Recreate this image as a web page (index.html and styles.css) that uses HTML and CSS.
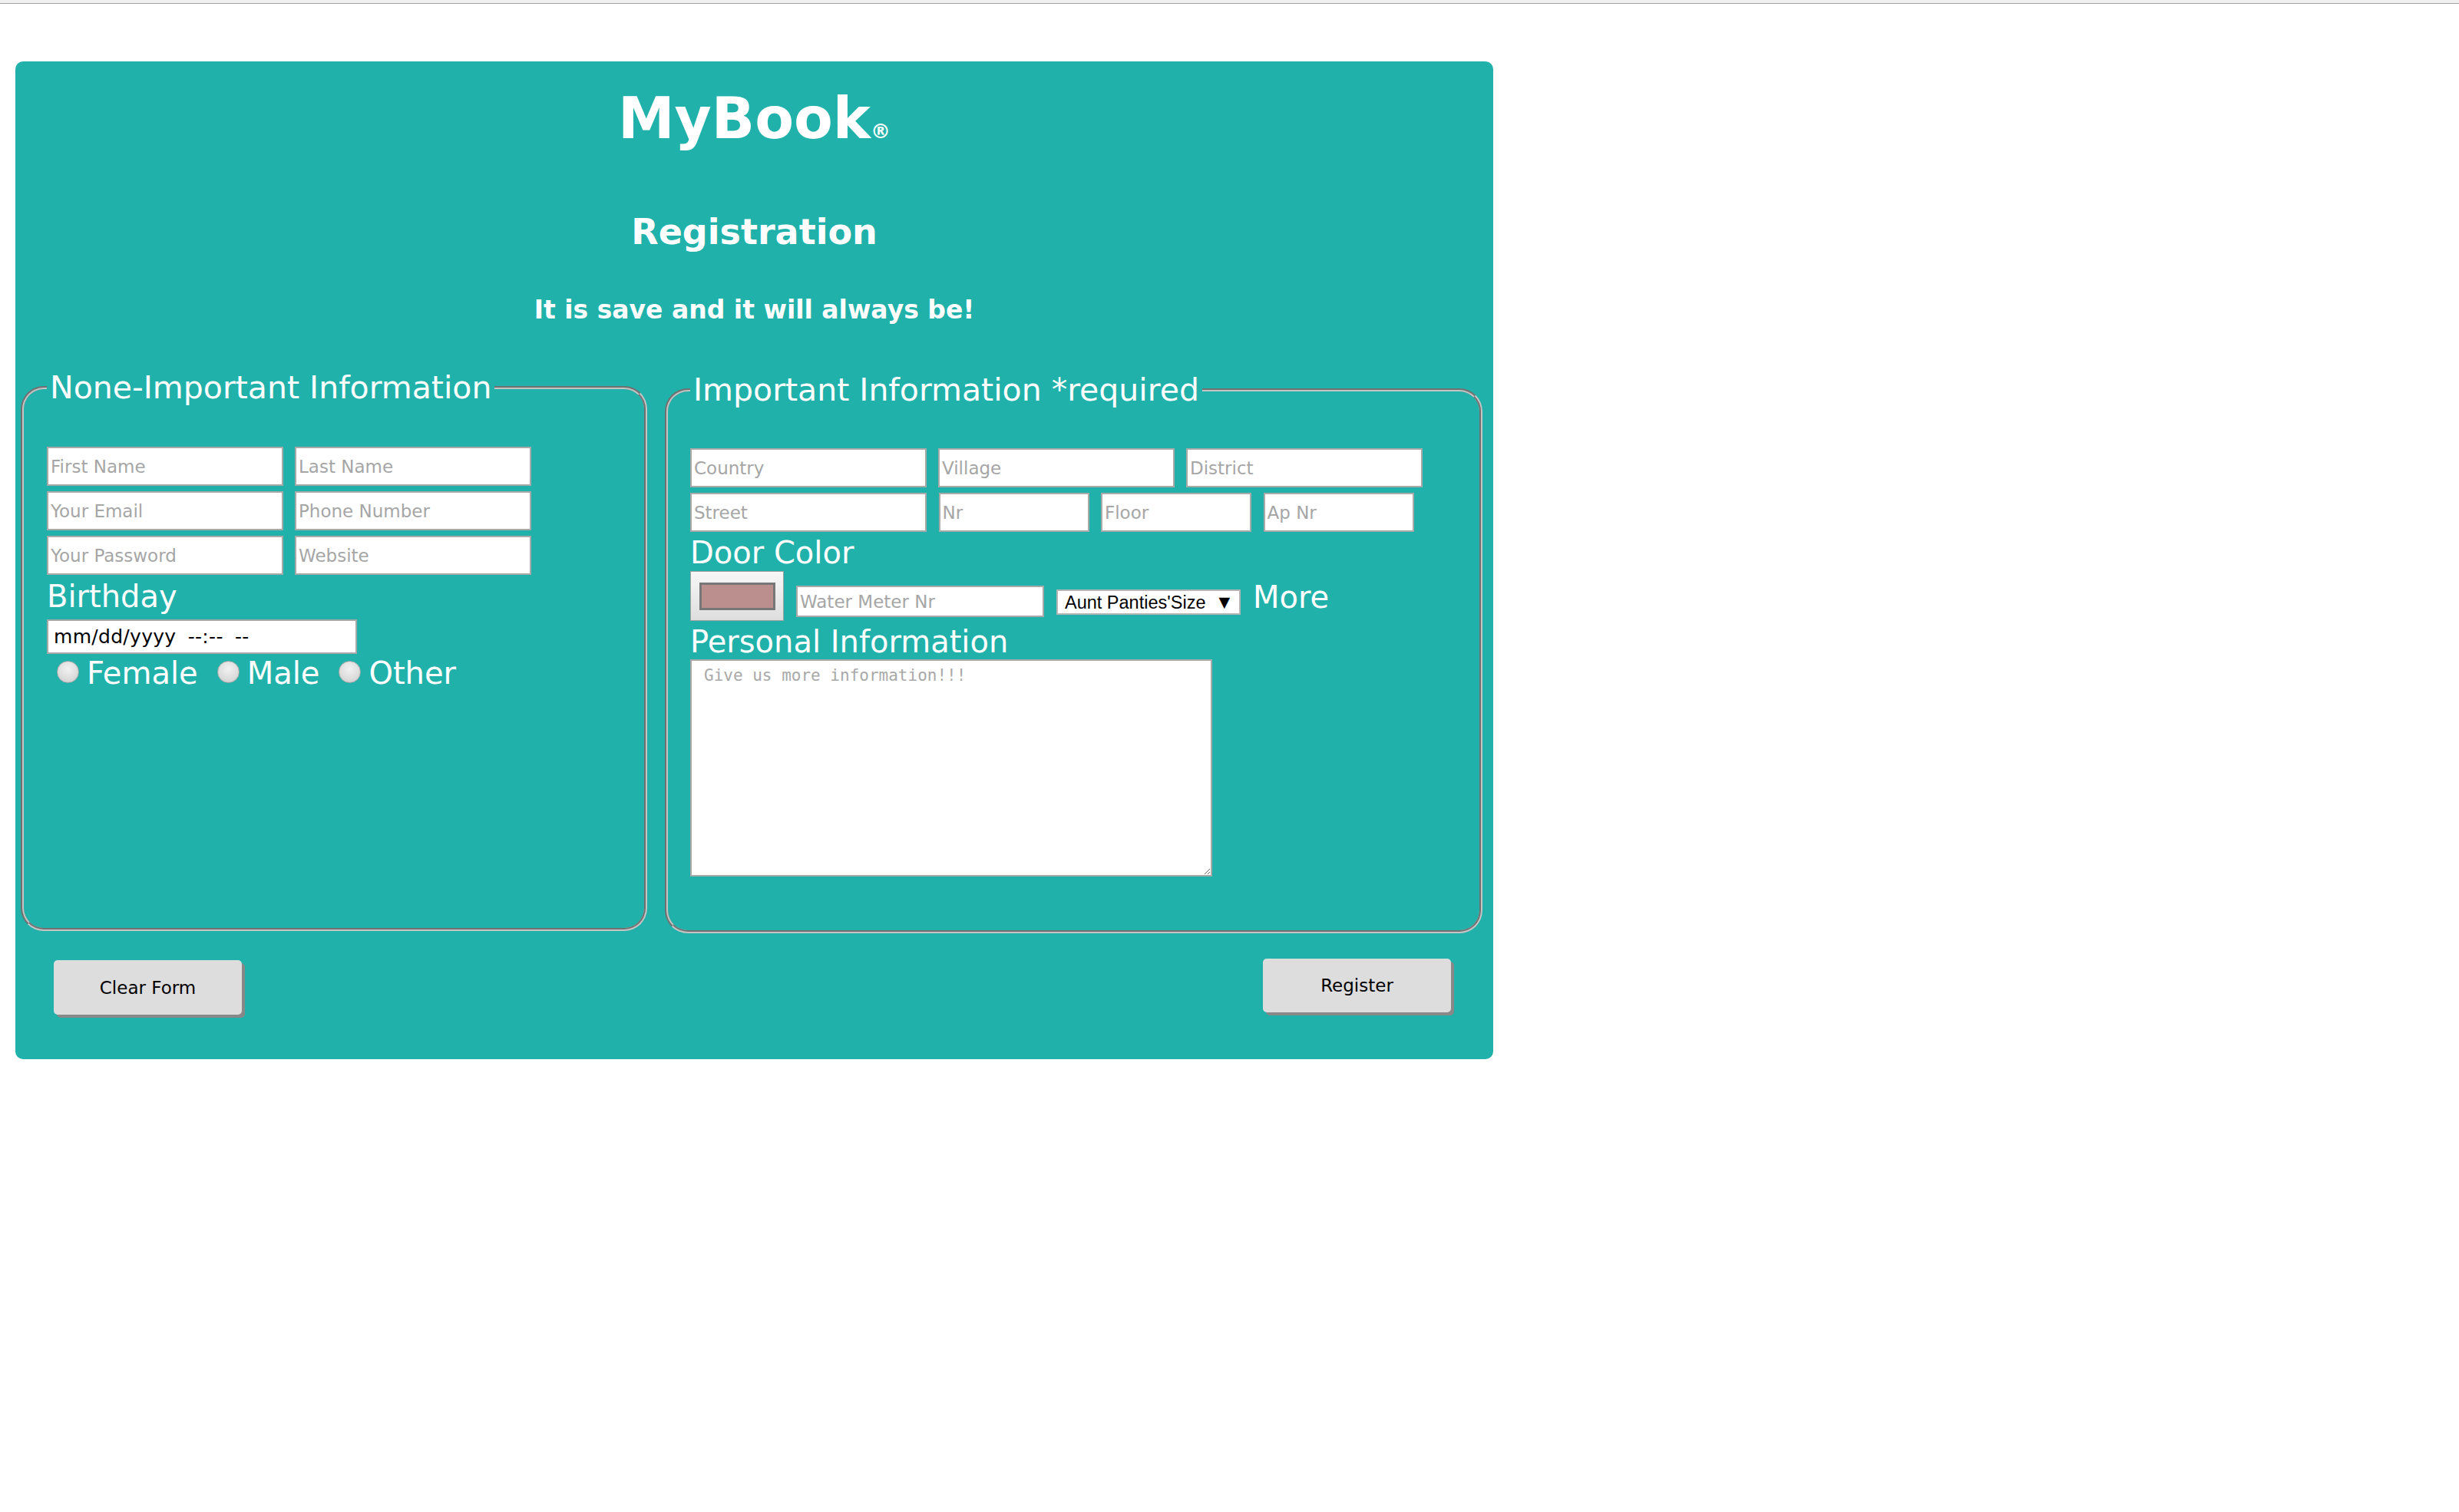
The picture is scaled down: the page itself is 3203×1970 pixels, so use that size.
FILE: index.html
```html
<!DOCTYPE html>
<html lang="en">
<head>
<meta charset="utf-8">
<title>MyBook Registration</title>
<link rel="stylesheet" href="styles.css">
</head>
<body>
<div class="topbar"></div>
<main class="page">
  <form class="panel">
    <h1 class="title">MyBook<span class="reg">®</span></h1>
    <h2 class="subtitle">Registration</h2>
    <h3 class="tagline">It is save and it will always be!</h3>

    <div class="sections">
      <fieldset class="box box-left">
        <legend>None-Important Information</legend>
        <div class="box-body">
          <div class="rows">
            <div class="row">
              <input class="field" type="text" placeholder="First Name">
              <input class="field" type="text" placeholder="Last Name">
            </div>
            <div class="row">
              <input class="field" type="text" placeholder="Your Email">
              <input class="field" type="text" placeholder="Phone Number">
            </div>
            <div class="row">
              <input class="field" type="text" placeholder="Your Password">
              <input class="field" type="text" placeholder="Website">
            </div>
          </div>
          <label class="label label-birthday">Birthday</label>
          <input class="date" type="text" value="mm/dd/yyyy --:-- --">
          <div class="radios">
            <input class="radio" type="radio" name="gender"><span class="radio-text">Female</span>
            <input class="radio" type="radio" name="gender"><span class="radio-text">Male</span>
            <input class="radio" type="radio" name="gender"><span class="radio-text">Other</span>
          </div>
        </div>
      </fieldset>

      <fieldset class="box box-right">
        <legend>Important Information *required</legend>
        <div class="box-body">
          <div class="rows">
            <div class="row">
              <input class="field" type="text" placeholder="Country">
              <input class="field" type="text" placeholder="Village">
              <input class="field" type="text" placeholder="District">
            </div>
            <div class="row row-address">
              <input class="field" type="text" placeholder="Street">
              <input class="field field-small" type="text" placeholder="Nr">
              <input class="field field-small" type="text" placeholder="Floor">
              <input class="field field-small" type="text" placeholder="Ap Nr">
            </div>
          </div>
          <label class="label label-door">Door Color</label>
          <div class="extras">
            <span class="color-pick"><span class="swatch"></span></span>
            <input class="meter" type="text" placeholder="Water Meter Nr">
            <span class="select-wrap">
              <select class="size-select"><option>Aunt Panties'Size</option></select>
            </span>
            <span class="more">More</span>
          </div>
          <label class="label label-personal">Personal Information</label>
          <textarea class="notes" placeholder="Give us more information!!!"></textarea>
        </div>
      </fieldset>
    </div>

    <div class="actions">
      <button type="reset" class="btn btn-clear">Clear Form</button>
      <button type="button" class="btn btn-register">Register</button>
    </div>
  </form>
</main>
</body>
</html>
```
FILE: styles.css
```css
html, body {
  margin: 0;
  padding: 0;
  background: #ffffff;
}

body {
  font-family: "DejaVu Sans", Verdana, sans-serif;
  color: #ffffff;
}

.topbar {
  height: 4px;
  background: #f0f0f0;
  border-bottom: 1px solid #a3a3a3;
}

.page {
  padding: 75px 0 0 20px;
}

.panel {
  width: 1925px;
  box-sizing: border-box;
  background: #20b2aa;
  border-radius: 10px;
  padding: 36px 0 59px 0;
}

.title {
  margin: 0;
  font-size: 74px;
  line-height: 76px;
  height: 76px;
  font-weight: bold;
  text-align: center;
}

.reg {
  font-size: 26px;
  line-height: 0;
}

.subtitle {
  margin: 87px 0 0 0;
  font-size: 46px;
  line-height: 46px;
  font-weight: bold;
  text-align: center;
}

.tagline {
  margin: 62px 0 0 0;
  font-size: 33px;
  line-height: 33px;
  font-weight: bold;
  text-align: center;
}

.sections {
  margin-top: 65px;
  display: flex;
  align-items: flex-start;
  gap: 23px;
  padding-left: 7px;
}

.box {
  margin: 0;
  box-sizing: border-box;
  height: 728px;
  min-width: 0;
  border: 4px groove #c4c4c4;
  border-radius: 30px;
  padding: 0 29px 0 30px;
}

.box-left {
  width: 816px;
}

.box-right {
  width: 1065px;
  margin-top: 3px;
  padding-left: 29px;
}

.box legend {
  padding: 0 4px;
  font-size: 41px;
  line-height: 40px;
  color: #ffffff;
}

.box-body {
  margin-top: 57px;
}

.box-right .box-body {
  margin-top: 56px;
}

.rows {
  display: flex;
  flex-direction: column;
  gap: 7px;
}

.row {
  display: flex;
  gap: 15px;
}

.row-address {
  gap: 15.5px;
}

.field,
.meter,
.date {
  box-sizing: border-box;
  margin: 0;
  border: 2px solid #a9a9a9;
  background: #ffffff;
  font-family: "DejaVu Sans", Verdana, sans-serif;
  font-size: 23px;
  color: #000000;
  padding: 0 3px;
  outline: none;
}

.field {
  width: 308px;
  height: 51px;
}

.field-small {
  width: 196px;
}

.field::placeholder,
.meter::placeholder {
  color: #a6a6a6;
}

.label {
  display: block;
  font-size: 40px;
  line-height: 46px;
  color: #ffffff;
}

.label-birthday {
  margin-top: 5px;
}

.date {
  display: block;
  width: 404px;
  height: 45px;
  margin-top: 7px;
  font-size: 25px;
  padding-left: 7px;
  word-spacing: 7px;
  letter-spacing: 0.3px;
}

.radios {
  display: flex;
  align-items: center;
  height: 46px;
  margin-top: 2px;
  font-size: 40px;
  line-height: 46px;
}

.radio {
  appearance: none;
  -webkit-appearance: none;
  box-sizing: border-box;
  width: 29px;
  height: 29px;
  margin: 0 10px 4px 25px;
  border-radius: 50%;
  border: 1px solid #a8a8a8;
  background: radial-gradient(circle at 50% 35%, #f2f2f2 0%, #dcdcdc 60%, #c8c8c8 100%);
}

.radio:first-child {
  margin-left: 13px;
}

.label-door {
  margin-top: 4px;
}

.extras {
  display: flex;
  align-items: flex-end;
  gap: 16px;
  margin-top: 1px;
  height: 65px;
}

.color-pick {
  box-sizing: border-box;
  width: 122px;
  height: 65px;
  border: 1px solid #a0a0a0;
  background: linear-gradient(#f7f7f7, #dedede);
  display: flex;
  align-items: center;
  justify-content: center;
}

.swatch {
  box-sizing: border-box;
  width: 99px;
  height: 36px;
  border: 3px solid #777777;
  background: #bc8f8f;
}

.meter {
  width: 323px;
  height: 41px;
  margin-bottom: 5px;
}

.select-wrap {
  position: relative;
  display: block;
  width: 240px;
  height: 33px;
  margin-bottom: 8px;
}

.select-wrap::after {
  content: "\25BC";
  position: absolute;
  right: 14px;
  top: 6px;
  font-family: "DejaVu Sans", sans-serif;
  font-size: 19px;
  line-height: 20px;
  color: #000000;
  pointer-events: none;
}

.size-select {
  appearance: none;
  -webkit-appearance: none;
  box-sizing: border-box;
  width: 240px;
  height: 33px;
  margin: 0;
  border: 2px solid #b5b5b5;
  border-radius: 0;
  background: #ffffff;
  color: #000000;
  font-family: "Liberation Sans", Arial, sans-serif;
  font-size: 23.5px;
  padding: 0 0 0 9px;
}

.more {
  font-size: 40px;
  line-height: 46px;
  margin-bottom: 8px;
  color: #ffffff;
}

.label-personal {
  margin-top: 3.5px;
}

.notes {
  display: block;
  box-sizing: border-box;
  width: 680px;
  height: 283px;
  margin: 0;
  border: 2px solid #a9a9a9;
  padding: 7px 16px;
  font-family: "DejaVu Sans Mono", monospace;
  font-size: 21px;
  line-height: 24px;
  background: #ffffff;
  color: #000000;
  outline: none;
}

.notes::placeholder {
  color: #a9a9a9;
}

.actions {
  margin-top: 33px;
  display: flex;
  justify-content: space-between;
  align-items: flex-start;
  padding: 0 55px 0 50px;
  height: 72px;
}

.btn {
  box-sizing: border-box;
  width: 245px;
  height: 70px;
  border: none;
  border-radius: 5px;
  background: #dddddd;
  box-shadow: 4px 4px 0 #888888;
  font-family: "DejaVu Sans", Verdana, sans-serif;
  font-size: 23px;
  color: #000000;
  padding: 0;
}

.btn-clear {
  margin-top: 2px;
  height: 71px;
}
```
